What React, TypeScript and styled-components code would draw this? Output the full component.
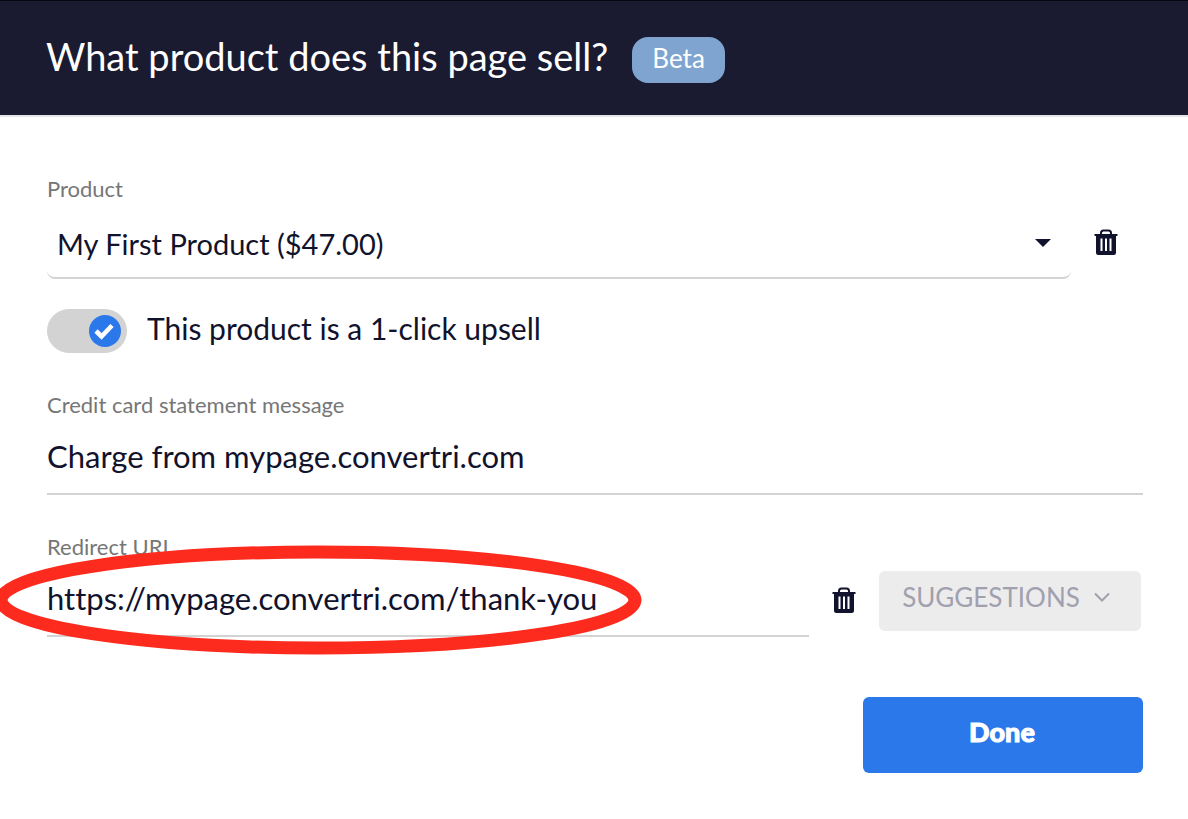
import React, { useState } from "react";
import styled, { createGlobalStyle } from "styled-components";

const ink = "#11122b";
const rule = "#d3d3d3";
const blue = "#2b78eb";

const GlobalStyle = createGlobalStyle`
  *, *::before, *::after { box-sizing: border-box; }
  body {
    margin: 0;
    background: #fff;
    color: ${ink};
    font-family: Lato, "Liberation Sans", sans-serif;
    font-weight: 400;
    font-variant-ligatures: none;
    overflow-x: hidden;
  }
  button, input, select { font: inherit; font-variant-ligatures: none; color: inherit; }
`;

const Header = styled.header`
  display: flex;
  align-items: flex-start;
  gap: 24px;
  padding: 36px 45px 32px 46px;
  background: #1a1b31;
  border-top: 1px solid #08080e;
  box-shadow: 0 2px 0 #e6e6ea;
`;

const Title = styled.h1`
  margin: 0;
  color: #fff;
  font-size: 38px;
  line-height: 38px;
  font-weight: 400;
`;

const Badge = styled.span`
  padding: 3px 20px 7px;
  border-radius: 16px;
  background: #7fa4d0;
  color: #fff;
  font-size: 26px;
  line-height: 36px;
`;

const Form = styled.form`
  display: flex;
  flex-direction: column;
  gap: 38px;
  padding: 60px 45px 46px 47px;
`;

const Group = styled.div`
  display: flex;
  flex-direction: column;
`;

const Label = styled.label`
  color: #767676;
  font-size: 22px;
  line-height: 28px;
`;

const Row = styled.div`
  display: flex;
  align-items: center;
`;

const SelectBox = styled.div`
  flex: 1;
  min-width: 0;
  display: grid;
  align-items: center;
  margin-top: 10px;
`;

const Select = styled.select`
  grid-area: 1 / 1;
  width: 100%;
  height: 66px;
  padding: 0 48px 4px 10px;
  appearance: none;
  border: 0 solid ${rule};
  border-bottom-width: 2px;
  border-radius: 8px;
  background: transparent;
  font-size: 29px;
`;

const Caret = styled.svg`
  grid-area: 1 / 1;
  justify-self: end;
  margin: 0 20px 6px 0;
  pointer-events: none;
`;

const Input = styled.input`
  flex: 1;
  min-width: 0;
  height: 76px;
  padding: 0;
  border: 0;
  border-bottom: 2px solid ${rule};
  border-radius: 0;
  background: transparent;
  font-size: 31px;
`;

const IconButton = styled.button<{ $wide?: boolean }>`
  display: flex;
  margin: 0 ${(p) => (p.$wide ? "25px" : "23px")} 0 23px;
  padding: 2px 0 0;
  border: 0;
  background: none;
  cursor: pointer;
`;

const Switch = styled.label`
  display: flex;
  align-items: center;
  gap: 20px;
  margin-top: 30px;
  font-size: 30px;
  line-height: 38px;
  cursor: pointer;
`;

const SwitchText = styled.span`
  padding-bottom: 6px;
`;

const SwitchInput = styled.input`
  appearance: none;
  display: flex;
  align-items: center;
  flex: none;
  width: 80px;
  height: 44px;
  margin: 0;
  padding: 0 6px;
  border-radius: 22px;
  background: ${rule};
  cursor: pointer;

  &::before {
    content: "";
    width: 32px;
    height: 32px;
    border-radius: 50%;
    background: #fff;
  }
  &:checked { justify-content: flex-end; }
  &:checked::before {
    background: ${blue} url("data:image/svg+xml,%3Csvg xmlns='http://www.w3.org/2000/svg' viewBox='0 0 32 32'%3E%3Cpath d='M7 16l5.500 5.500 10.500-11' fill='none' stroke='white' stroke-width='4.600'/%3E%3C/svg%3E") center / 32px no-repeat;
  }
`;

const UrlRow = styled(Row)`
  position: relative;
`;

const Highlight = styled.svg`
  position: absolute;
  left: -53px;
  top: -16px;
  overflow: visible;
  pointer-events: none;
`;

const Suggestions = styled.button`
  display: flex;
  align-items: center;
  justify-content: center;
  gap: 14px;
  width: 262px;
  height: 60px;
  margin: 4px 2px 0 0;
  padding: 0 8px 8px 0;
  border: 0;
  border-radius: 6px;
  background: #ececec;
  color: #a0a0ae;
  font-size: 26px;
  cursor: pointer;
`;

const Done = styled.button`
  align-self: flex-end;
  width: 280px;
  height: 76px;
  margin-top: 22px;
  padding: 0 2px 8px 0;
  border: 0;
  border-radius: 6px;
  background: ${blue};
  color: #fff;
  font-size: 27px;
  font-weight: 900;
  -webkit-text-stroke: 1px #fff;
  cursor: pointer;
`;

const TrashIcon = () => (
  <svg width="24" height="27" viewBox="0 0 24 27" fill="none" aria-hidden="true">
    <path d="M7 5.500V4Q7 1.500 9.500 1.500h5Q17 1.500 17 4v1.500" stroke={ink} strokeWidth="2" />
    <path d="M0.500 5h23v2H22v16.500q0 2.500-2.500 2.500h-15Q2 26 2 23.500V7H0.500z" fill={ink} />
    <path d="M7.500 9.500v12.500M12 9.500v12.500M16.500 9.500v12.500" stroke="#fff" strokeWidth="2" />
  </svg>
);

export default function App() {
  const [upsell, setUpsell] = useState(true);
  const [message, setMessage] = useState("Charge from mypage.convertri.com");
  const [url, setUrl] = useState("https://mypage.convertri.com/thank-you");

  return (
    <>
      <GlobalStyle />
      <Header>
        <Title>What product does this page sell?</Title>
        <Badge>Beta</Badge>
      </Header>
      <Form onSubmit={(e) => e.preventDefault()}>
        <Group>
          <Label htmlFor="product">Product</Label>
          <Row>
            <SelectBox>
              <Select id="product">
                <option>My First Product ($47.00)</option>
              </Select>
              <Caret width="16" height="8" viewBox="0 0 16 8" aria-hidden="true">
                <path d="M0 0h16L8 8z" fill={ink} />
              </Caret>
            </SelectBox>
            <IconButton type="button" aria-label="Remove product" $wide>
              <TrashIcon />
            </IconButton>
          </Row>
          <Switch>
            <SwitchInput
              type="checkbox"
              role="switch"
              checked={upsell}
              onChange={(e) => setUpsell(e.target.checked)}
            />
            <SwitchText>This product is a 1-click upsell</SwitchText>
          </Switch>
        </Group>
        <Group>
          <Label htmlFor="message">Credit card statement message</Label>
          <Row>
            <Input id="message" value={message} onChange={(e) => setMessage(e.target.value)} />
          </Row>
        </Group>
        <Group>
          <Label htmlFor="redirect">Redirect URL</Label>
          <UrlRow>
            <Input id="redirect" value={url} onChange={(e) => setUrl(e.target.value)} />
            <IconButton type="button" aria-label="Remove redirect URL">
              <TrashIcon />
            </IconButton>
            <Suggestions type="button">
              SUGGESTIONS
              <svg width="16" height="10" viewBox="0 0 16 10" fill="none" aria-hidden="true">
                <path d="M1 1.500l7 7 7-7" stroke="currentColor" strokeWidth="2" />
              </svg>
            </Suggestions>
            <Highlight width="648" height="110" viewBox="0 0 648 110" aria-hidden="true">
              <ellipse cx="324" cy="55" rx="317" ry="48" fill="none" stroke="#fd2b1d" strokeWidth="13" />
            </Highlight>
          </UrlRow>
        </Group>
        <Done type="submit">Done</Done>
      </Form>
    </>
  );
}
